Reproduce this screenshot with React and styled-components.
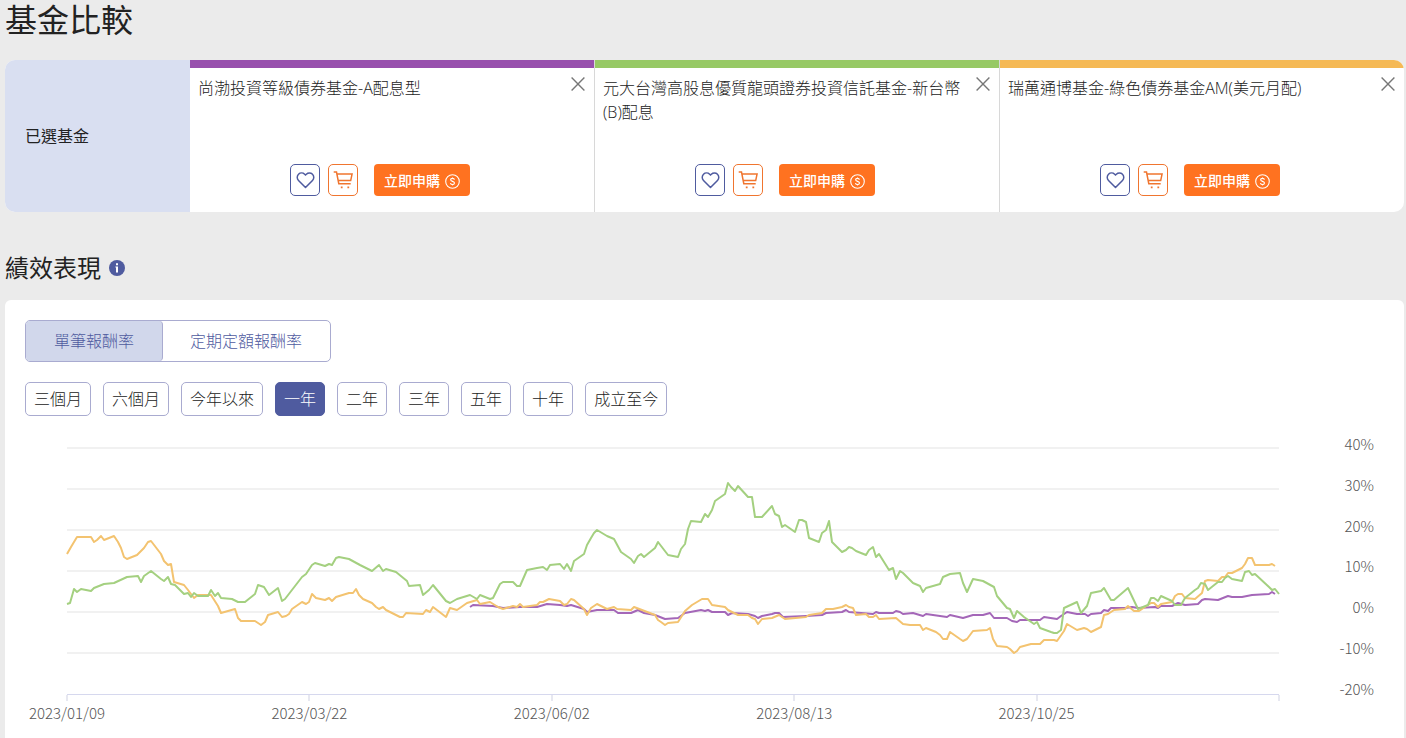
import React, { useState } from "react";
import styled, { createGlobalStyle } from "styled-components";

const GlobalStyle = createGlobalStyle`
  * {
    box-sizing: border-box;
  }
  body {
    margin: 0;
    background-color: #ebebeb;
    color: #222;
    font-family: "Open Sans", "Noto Sans CJK TC", sans-serif;
    font-size: 16px;
    font-weight: 300;
    line-height: 24px;
  }
  button {
    font: inherit;
    cursor: pointer;
  }
`;

const Page = styled.main`
  padding: 0 2px 0 5px;
`;

const Title = styled.h1`
  margin: 0 0 20px;
  font-size: 32px;
  font-weight: 400;
  line-height: 40px;
`;

const Subtitle = styled.h2`
  display: flex;
  align-items: center;
  gap: 8px;
  margin: 40px 0 16px;
  font-size: 24px;
  font-weight: 400;
  line-height: 32px;
`;

const InfoButton = styled.button`
  display: flex;
  padding: 0;
  border: 0;
  background: none;
`;

const Compare = styled.section`
  display: flex;
  min-height: 152px;
  border-radius: 10px;
  overflow: hidden;
  background-color: #fff;
`;

const CompareLabel = styled.div`
  display: flex;
  align-items: center;
  width: 185px;
  padding-left: 20px;
  background-color: #d9dff1;
  font-weight: 400;
`;

const FundCard = styled.article`
  display: flex;
  flex: 1;
  flex-direction: column;
  border-right: 1px solid #d8d8d8;

  &:last-child {
    border-right: 0;
  }
`;

const FundBar = styled.div`
  height: 8px;
  background-color: ${(props) => props.$color};
`;

const FundHead = styled.div`
  display: flex;
  flex: 1;
  align-items: flex-start;
  gap: 4px;
  padding: 8px 4px 0 8px;
`;

const FundName = styled.div`
  flex: 1;
`;

const CloseButton = styled.button`
  display: flex;
  align-items: center;
  justify-content: center;
  width: 24px;
  height: 16px;
  padding: 0;
  border: 0;
  background: none;
`;

const Actions = styled.div`
  display: flex;
  justify-content: center;
  gap: 8px;
  padding: 0 24px 16px 0;
`;

const IconButton = styled.button`
  display: flex;
  align-items: center;
  justify-content: center;
  width: 30px;
  height: 32px;
  padding: 0;
  border: 1px solid ${(props) => props.$color};
  border-radius: 5px;
  background-color: #fff;
  color: ${(props) => props.$color};
`;

const BuyButton = styled.button`
  display: flex;
  align-items: center;
  gap: 5px;
  height: 32px;
  margin-left: 8px;
  padding: 2px 10px 0;
  border: 0;
  border-radius: 4px;
  background-color: #ff7220;
  color: #fff;
  font-size: 14px;
  font-weight: 500;
`;

const Panel = styled.section`
  padding: 20px 20px 40px;
  border-radius: 6px 6px 0 0;
  background-color: #fff;
`;

const Segment = styled.div`
  display: inline-flex;
  height: 42px;
  border: 1px solid #a9abd0;
  border-radius: 5px;
`;

const SegmentButton = styled.button`
  margin-right: ${(props) => (props.$active ? "-1px" : "0")};
  padding: 0 28px;
  border: 0;
  border-right: ${(props) => (props.$active ? "1px solid #a9abd0" : "0")};
  border-radius: 4px;
  background-color: ${(props) => (props.$active ? "#d1d7eb" : "transparent")};
  color: #4f5b9f;
`;

const Ranges = styled.div`
  display: flex;
  flex-wrap: wrap;
  gap: 12px;
  margin-top: 20px;
`;

const RangeButton = styled.button`
  height: 34px;
  padding: 0 8px;
  border: 1px solid ${(props) => (props.$active ? "#4f5b9f" : "#a9abd0")};
  border-radius: 5px;
  background-color: ${(props) => (props.$active ? "#4f5b9f" : "#fff")};
  color: ${(props) => (props.$active ? "#fff" : "#222")};
`;

const Chart = styled.div`
  display: grid;
  grid-template-columns: 1fr 95px;
  margin-top: 31px;
  padding: 0 10px 0 42px;
  color: #555;
  font-family: "Noto Sans CJK TC", sans-serif;
  font-size: 15px;
  line-height: 20px;
`;

const Plot = styled.svg`
  display: block;
  width: 100%;
  height: 254px;
  overflow: visible;
`;

const YAxis = styled.div`
  display: flex;
  flex-direction: column;
  justify-content: space-between;
  height: 265px;
  margin-top: -13px;
  text-align: right;
`;

const XAxis = styled.div`
  display: flex;
  justify-content: space-between;
  padding-top: 2px;
`;

const XLabel = styled.div`
  display: flex;
  justify-content: center;
  width: 0;
  white-space: nowrap;
`;

const funds = [
  { id: 1, name: "尚渤投資等級債券基金-A配息型", color: "#9850ad" },
  {
    id: 2,
    name: "元大台灣高股息優質龍頭證券投資信託基金-新台幣(B)配息",
    color: "#97c965",
  },
  { id: 3, name: "瑞萬通博基金-綠色債券基金AM(美元月配)", color: "#f5b955" },
];

const types = ["單筆報酬率", "定期定額報酬率"];
const ranges = [
  "三個月",
  "六個月",
  "今年以來",
  "一年",
  "二年",
  "三年",
  "五年",
  "十年",
  "成立至今",
];

const yLabels = ["40%", "30%", "20%", "10%", "0%", "-10%", "-20%"];
const xLabels = [
  "2023/01/09",
  "2023/03/22",
  "2023/06/02",
  "2023/08/13",
  "2023/10/25",
  "",
];

// plot is 1212 x 247 units, top = 40%, bottom = -20%
const series = [
  {
    color: "#a467b8",
    points:
      "403,160 406,158 426,159 436,161 453,160 457,160 470,160 480,157 493,158 500,159 504,158 517,162 520,165 530,163 547,163 551,166 564,166 571,163 577,166 588,168 598,172 611,171 618,166 634,163 638,164 641,163 645,165 658,165 661,168 665,166 681,167 688,169 691,171 695,169 705,167 708,166 712,166 716,170 739,169 755,168 759,166 775,165 779,163 782,165 806,167 809,165 812,166 826,166 829,164 833,165 836,167 846,166 856,169 859,167 880,170 883,168 896,171 906,168 916,168 923,166 927,171 940,171 945,174 950,175 953,173 973,173 977,170 990,172 994,169 1000,165 1010,167 1018,167 1021,169 1024,167 1034,166 1037,163 1041,164 1044,161 1058,161 1065,160 1071,161 1088,160 1091,161 1094,159 1105,159 1111,156 1118,158 1131,157 1135,153 1138,152 1151,153 1161,149 1165,150 1175,150 1185,148 1202,147 1205,145 1208,147",
  },
  {
    color: "#f3c370",
    points:
      "0,107 4,100 10,90 24,90 27,95 30,93 34,89 37,93 47,89 51,95 54,101 57,110 60,112 70,108 77,101 81,95 84,94 94,107 97,114 101,118 104,117 107,135 117,138 121,143 127,151 131,148 144,148 151,159 154,166 168,162 171,171 174,174 188,174 194,178 198,175 201,168 211,165 215,170 219,169 222,167 225,162 235,155 239,157 242,155 245,147 249,151 258,153 262,151 265,154 269,150 282,146 286,146 289,142 292,148 296,152 305,156 309,160 312,162 316,160 319,163 333,170 336,170 339,166 356,167 359,163 363,165 366,160 379,170 383,161 390,163 400,156 410,153 413,157 423,155 431,160 436,162 446,159 450,160 453,157 456,160 470,158 473,155 476,155 482,152 493,154 497,158 500,157 504,152 507,153 517,162 520,168 524,161 530,157 540,162 547,160 550,162 564,163 567,160 575,163 588,168 591,173 594,175 598,178 601,176 611,175 618,164 625,158 635,152 641,152 645,158 658,160 661,163 671,168 681,168 685,171 688,172 691,177 695,172 705,171 712,168 718,172 739,170 742,168 755,166 759,162 766,162 775,160 779,158 782,160 786,161 789,168 799,167 802,170 806,170 809,168 812,172 829,171 836,177 843,178 853,178 856,183 859,181 869,185 873,188 876,192 880,192 883,185 893,192 896,194 900,192 906,184 920,183 923,181 926,192 930,199 940,200 943,202 947,206 950,204 953,200 964,197 973,197 977,193 987,193 990,194 997,184 1000,177 1010,183 1017,181 1020,182 1024,185 1034,180 1037,168 1041,167 1047,163 1058,162 1061,159 1067,164 1072,164 1084,156 1087,156 1091,160 1094,157 1105,155 1108,149 1111,147 1115,147 1118,151 1128,152 1135,146 1138,134 1141,133 1151,134 1155,130 1158,130 1161,126 1165,126 1175,121 1178,117 1181,111 1185,111 1188,118 1202,118 1205,117 1208,119",
  },
  {
    color: "#a4d080",
    points:
      "0,157 3,156 7,142 10,145 14,142 24,144 27,141 37,137 47,136 60,130 71,129 74,135 77,129 84,124 94,132 97,134 101,130 104,137 108,138 117,147 121,146 124,150 127,146 131,149 141,149 144,143 148,149 151,146 154,151 165,152 171,155 178,155 188,147 191,138 197,140 202,148 211,141 215,154 218,152 235,130 239,127 245,118 248,116 258,119 262,117 265,118 269,111 272,110 282,112 293,118 305,124 312,118 316,124 319,122 329,125 340,134 342,139 353,138 356,148 362,143 366,138 379,154 383,156 390,152 403,148 410,152 413,148 423,152 426,151 433,137 436,135 446,135 450,139 453,139 460,123 470,121 476,120 480,123 483,118 493,117 497,122 500,117 504,124 507,114 517,107 520,98 524,91 527,86 530,83 540,89 547,92 554,105 564,112 567,116 571,109 574,107 577,110 588,101 591,95 601,108 611,110 614,102 618,97 621,82 624,74 634,75 638,67 641,70 645,63 648,54 658,47 661,36 664,40 668,44 671,39 681,50 685,50 688,70 695,70 705,59 708,67 712,69 715,80 718,78 728,85 732,73 735,73 739,75 742,91 752,95 755,86 759,83 762,74 765,95 775,105 779,103 782,100 785,101 789,104 799,108 802,103 806,100 809,110 812,107 822,123 826,121 829,132 833,124 836,126 846,136 853,139 856,145 859,141 873,137 876,130 883,127 893,126 896,136 900,145 906,132 916,134 927,140 930,149 940,161 943,162 947,171 950,164 957,170 967,177 970,175 973,181 984,185 987,186 990,186 994,183 997,161 1010,155 1014,166 1020,159 1024,146 1034,144 1037,141 1044,153 1047,153 1061,141 1071,162 1081,158 1084,151 1087,151 1091,154 1094,149 1105,154 1108,158 1114,158 1118,151 1128,143 1131,141 1134,136 1138,137 1141,143 1151,135 1155,135 1158,131 1161,129 1165,132 1175,134 1178,125 1182,124 1185,128 1188,127 1202,140 1205,143 1208,142 1212,147",
  },
];

const gridLines = [1, 42, 83, 124, 165, 206];
const ticks = [0, 242, 485, 727, 970, 1212];

const CloseIcon = () => (
  <svg width="14" height="14" viewBox="0 0 14 14" stroke="#777" strokeWidth="1.4">
    <path d="M.6.6l12.8 12.8M13.4.6L.6 13.4" />
  </svg>
);

const HeartIcon = () => (
  <svg
    width="19"
    height="19"
    viewBox="0 0 24 24"
    fill="none"
    stroke="currentColor"
    strokeWidth="1.9"
    strokeLinejoin="round"
  >
    <path d="M20.84 4.11a5.5 5.5 0 0 0-7.78 0L12 5.17l-1.06-1.06a5.5 5.5 0 0 0-7.78 7.78L12 20.73l8.84-8.84a5.5 5.5 0 0 0 0-7.78z" />
  </svg>
);

const CartIcon = () => (
  <svg width="20" height="18" viewBox="0 0 20 18" fill="none" stroke="currentColor" strokeWidth="1.5">
    <path d="M.7 1h2.8l2.3 11.7h11.9M4 2.9h15.1l-1.4 6.7H5.2" />
    <path d="M7.8 16.3h1.8M14.4 16.3h1.8" strokeWidth="1.8" />
  </svg>
);

const DollarIcon = () => (
  <svg width="15" height="15" viewBox="0 0 15 15" fill="none" stroke="currentColor" strokeWidth="1.1">
    <circle cx="7.5" cy="7.5" r="6.8" />
    <path d="M9.4 5.8c-.1-.9-.8-1.4-1.9-1.4s-1.9.5-1.9 1.4c0 2.1 3.9 1.1 3.9 3.3 0 1-.8 1.5-2 1.5s-2-.5-2-1.5M7.5 3.4v1M7.5 10.6v1" />
  </svg>
);

const InfoIcon = () => (
  <svg width="16" height="16" viewBox="0 0 16 16">
    <circle cx="8" cy="8" r="8" fill="#4f5b9f" />
    <path d="M7 3.2h2v2H7zM6.4 6.4H9v6H7V7.6h-.6z" fill="#fff" />
  </svg>
);

const ReturnChart = () => (
  <Chart>
    <div>
      <Plot viewBox="0 0 1212 254" preserveAspectRatio="none">
        {gridLines.map((y) => (
          <path key={y} d={`M0 ${y}H1212`} stroke="#f1f1f1" strokeWidth="2" />
        ))}
        <path d="M0 247.5H1212" stroke="#d6d8ee" />
        {ticks.map((x) => (
          <path key={x} d={`M${x} 248v6`} stroke="#cfd1e2" vectorEffect="non-scaling-stroke" />
        ))}
        {series.map((item) => (
          <polyline
            key={item.color}
            points={item.points}
            fill="none"
            stroke={item.color}
            strokeWidth="2"
            strokeLinejoin="round"
            vectorEffect="non-scaling-stroke"
          />
        ))}
      </Plot>
      <XAxis>
        {xLabels.map((label) => (
          <XLabel key={label}>{label}</XLabel>
        ))}
      </XAxis>
    </div>
    <YAxis>
      {yLabels.map((label) => (
        <div key={label}>{label}</div>
      ))}
    </YAxis>
  </Chart>
);

const App = () => {
  const [type, setType] = useState("單筆報酬率");
  const [range, setRange] = useState("一年");

  return (
    <Page>
      <GlobalStyle />
      <Title>基金比較</Title>
      <Compare>
        <CompareLabel>已選基金</CompareLabel>
        {funds.map((fund) => (
          <FundCard key={fund.id}>
            <FundBar $color={fund.color} />
            <FundHead>
              <FundName>{fund.name}</FundName>
              <CloseButton aria-label="移除">
                <CloseIcon />
              </CloseButton>
            </FundHead>
            <Actions>
              <IconButton $color="#4f5b9f" aria-label="收藏">
                <HeartIcon />
              </IconButton>
              <IconButton $color="#f0752f" aria-label="加入購物車">
                <CartIcon />
              </IconButton>
              <BuyButton>
                立即申購
                <DollarIcon />
              </BuyButton>
            </Actions>
          </FundCard>
        ))}
      </Compare>

      <Subtitle>
        績效表現
        <InfoButton aria-label="說明">
          <InfoIcon />
        </InfoButton>
      </Subtitle>
      <Panel>
        <Segment>
          {types.map((item) => (
            <SegmentButton key={item} $active={item === type} onClick={() => setType(item)}>
              {item}
            </SegmentButton>
          ))}
        </Segment>
        <Ranges>
          {ranges.map((item) => (
            <RangeButton key={item} $active={item === range} onClick={() => setRange(item)}>
              {item}
            </RangeButton>
          ))}
        </Ranges>
        <ReturnChart />
      </Panel>
    </Page>
  );
};

export default App;
